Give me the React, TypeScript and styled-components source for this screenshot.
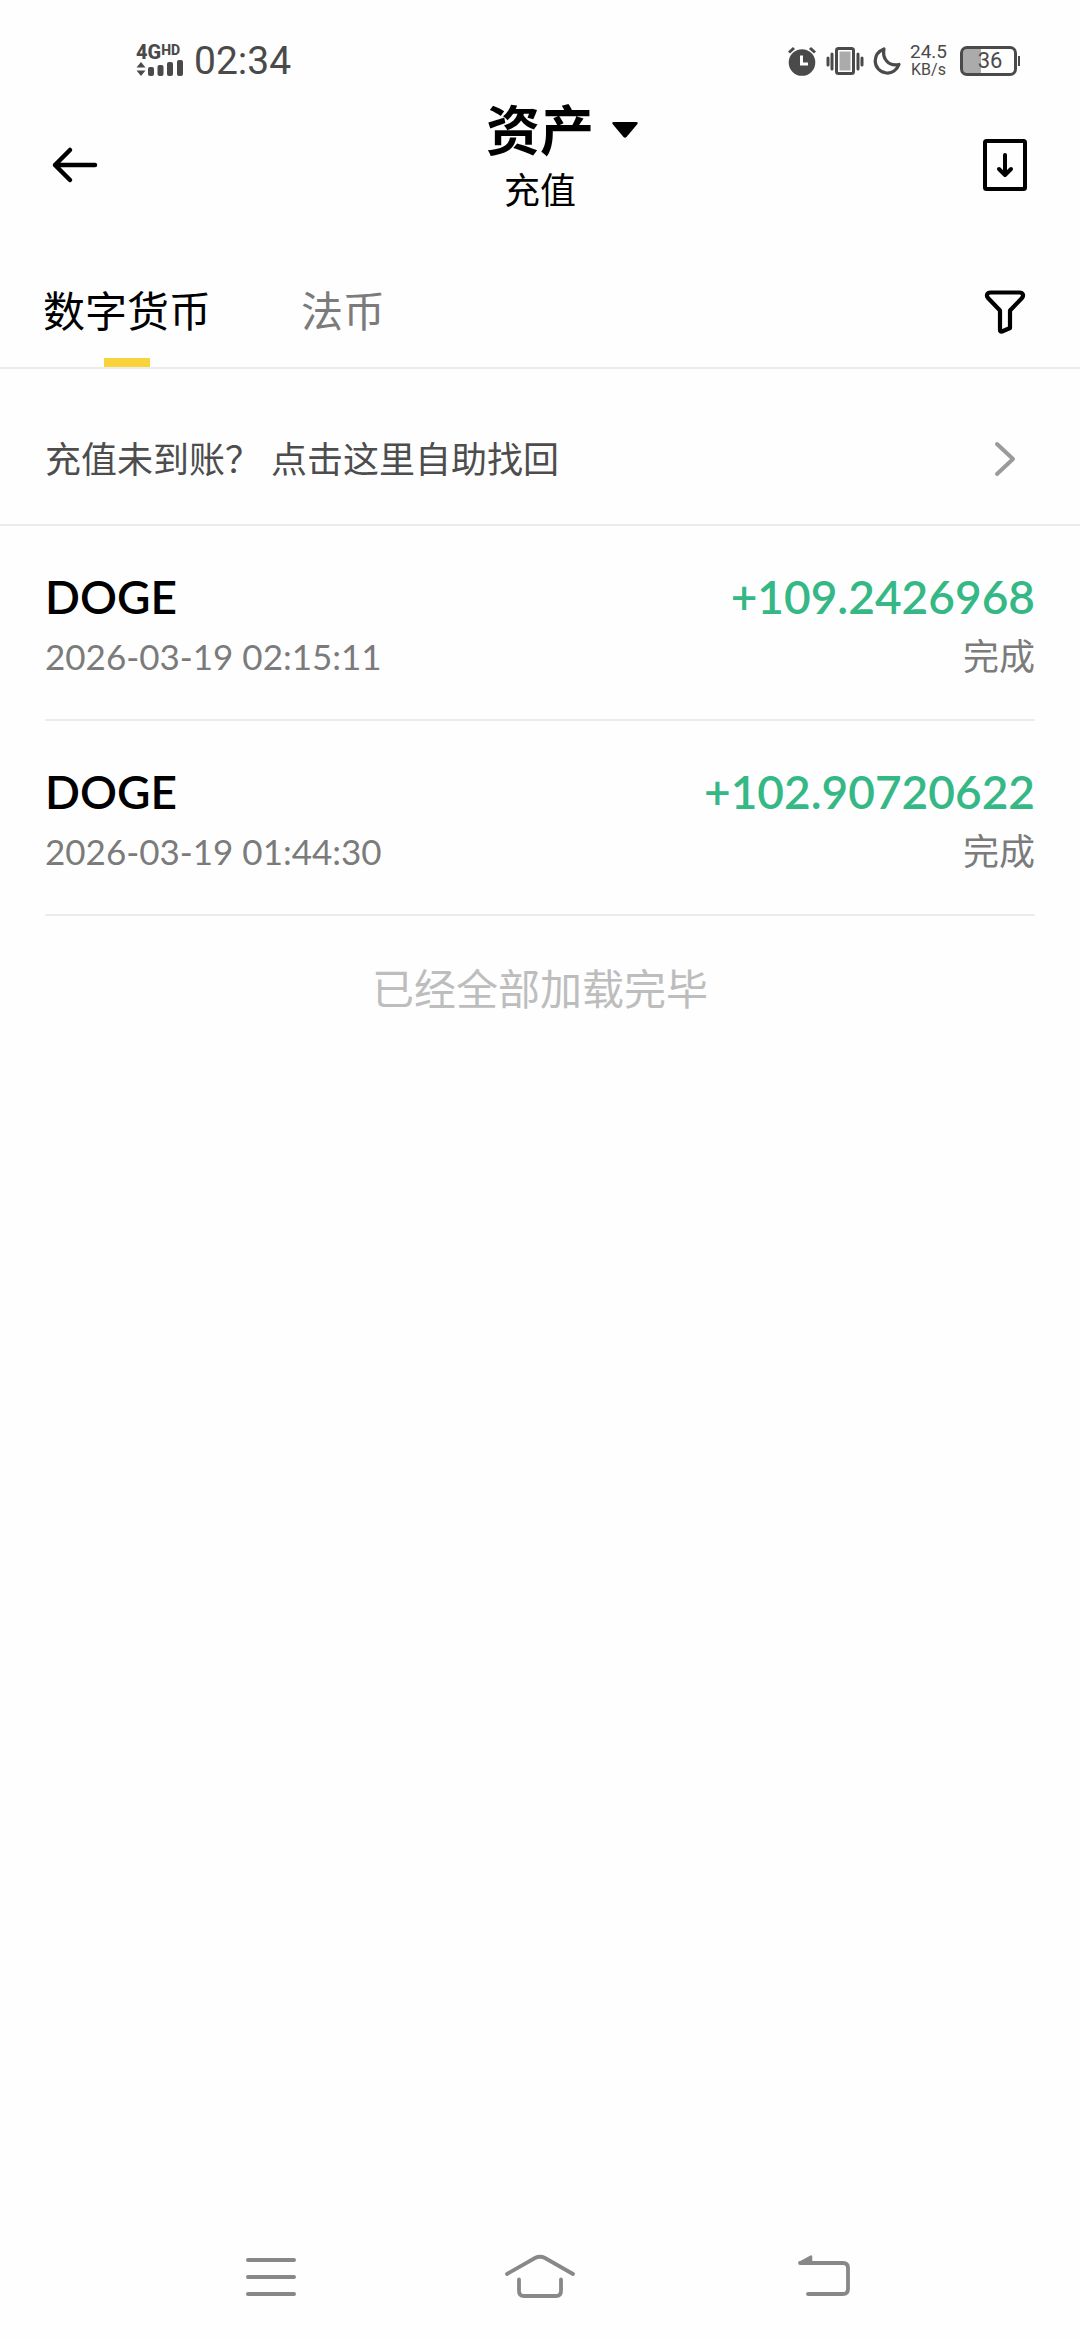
import React, { useState } from "react";
import styled, { createGlobalStyle } from "styled-components";

const cjk = `"Liberation Sans", "Noto Sans CJK SC", sans-serif`;
const latin = `Lato, "Noto Sans CJK SC", sans-serif`;
const system = `Roboto, "Noto Sans CJK SC", sans-serif`;

const GlobalStyle = createGlobalStyle`
  *, *::before, *::after { box-sizing: border-box; }
  body { margin: 0; background: #fefefe; font-family: ${cjk}; color: #000; }
  button { border: 0; padding: 0; margin: 0; background: none; color: inherit; font: inherit; cursor: pointer; }
  svg { display: block; flex: none; }
`;

const Screen = styled.div`
  min-height: 100vh;
  display: flex;
  flex-direction: column;
`;

const StatusBar = styled.div`
  display: flex;
  align-items: center;
  justify-content: space-between;
  height: 96px;
  padding: 25px 60px 0 136px;
  font-family: ${system};
  color: #4a4a4a;
`;

const StatusGroup = styled.div<{ $gap: number }>`
  display: flex;
  align-items: center;
  gap: ${(p) => p.$gap}px;
`;

const Signal = styled.div`
  display: flex;
  flex-direction: column;
  width: 48px;
`;

const Network = styled.div`
  display: flex;
  align-items: flex-start;
  font-size: 20px;
  font-weight: 800;
  line-height: 16px;
`;

const NetworkTag = styled.span`
  font-size: 14px;
  line-height: 12px;
`;

const Clock = styled.span`
  font-size: 39px;
  line-height: 40px;
`;

const Speed = styled.div`
  display: flex;
  flex-direction: column;
  align-items: center;
  font-size: 19px;
  line-height: 18px;
`;

const SpeedUnit = styled.span`
  font-size: 16px;
`;

const Battery = styled.div`
  display: flex;
  align-items: center;
  gap: 1px;
  margin-left: 4px;
`;

const BatteryCell = styled.div`
  display: flex;
  align-items: center;
  justify-content: center;
  width: 57px;
  height: 30px;
  padding-left: 3px;
  border: 3px solid #4a4a4a;
  border-radius: 7px;
  background: linear-gradient(to right, #ababab 36%, transparent 36%);
  font-size: 22px;
  line-height: 24px;
`;

const BatteryTip = styled.span`
  width: 2px;
  height: 10px;
  background: #4a4a4a;
`;

const Header = styled.header`
  display: grid;
  grid-template-columns: 60px 1fr 60px;
  align-items: center;
  height: 138px;
  padding: 0 45px;
`;

const IconButton = styled.button`
  display: flex;
  align-items: center;
  justify-content: center;
  height: 60px;
`;

const TitleBlock = styled.div`
  align-self: start;
  text-align: center;
`;

const TitleButton = styled.button`
  display: grid;
  grid-template-columns: 1fr auto 1fr;
  align-items: center;
  gap: 16px;
  width: 100%;
`;

const Title = styled.span`
  grid-column: 2;
  font-size: 54px;
  font-weight: 700;
  line-height: 72px;
`;

const Subtitle = styled.div`
  font-size: 36px;
  line-height: 48px;
`;

const TabBar = styled.nav`
  display: flex;
  align-items: flex-end;
  justify-content: space-between;
  height: 135px;
  padding: 0 45px 0 43px;
  border-bottom: 2px solid #ececec;
`;

const Tabs = styled.div`
  display: flex;
  gap: 90px;
`;

const Tab = styled.button<{ $active: boolean }>`
  display: flex;
  flex-direction: column;
  align-items: center;
  gap: 15px;
  font-size: 42px;
  line-height: 60px;
  color: ${(p) => (p.$active ? "#000" : "#7b7b7b")};

  &::after {
    content: "";
    width: 46px;
    height: 9px;
    background: ${(p) => (p.$active ? "#f8d33a" : "transparent")};
  }
`;

const FilterSlot = styled.div`
  display: flex;
  padding-bottom: 25px;
`;

const Notice = styled.a`
  display: flex;
  align-items: center;
  justify-content: space-between;
  padding: 65px 60px 36px 45px;
  border-bottom: 2px solid #ececec;
  font-size: 36px;
  line-height: 54px;
  color: #4d4d4d;
  text-decoration: none;
`;

const List = styled.ul`
  list-style: none;
  margin: 0;
  padding: 0 45px;
`;

const Item = styled.li`
  display: flex;
  justify-content: space-between;
  padding: 41px 0 34px;
  border-bottom: 2px solid #ececec;
  font-family: ${latin};
`;

const ItemSide = styled.div<{ $end?: boolean }>`
  display: flex;
  flex-direction: column;
  align-items: ${(p) => (p.$end ? "flex-end" : "flex-start")};
`;

const Main = styled.span<{ $color: string }>`
  font-size: 46px;
  font-weight: 600;
  line-height: 60px;
  color: ${(p) => p.$color};
`;

const Meta = styled.span<{ $size: number }>`
  font-size: ${(p) => p.$size}px;
  line-height: 58px;
  color: #7b7b7b;
`;

const EndNote = styled.p`
  margin: 0;
  padding: 45px 0;
  text-align: center;
  font-size: 42px;
  line-height: 60px;
  color: #bdbdbd;
`;

const SystemNav = styled.nav`
  display: grid;
  grid-template-columns: repeat(3, 1fr);
  align-items: center;
  height: 126px;
  margin-top: auto;
  padding: 0 135px 0 136px;
`;

const records = [
  { coin: "DOGE", amount: "+109.2426968", time: "2026-03-19 02:15:11", status: "完成" },
  { coin: "DOGE", amount: "+102.90720622", time: "2026-03-19 01:44:30", status: "完成" },
];

const SignalBars = () => (
  <svg width="48" height="17" viewBox="0 0 48 17" fill="#4a4a4a">
    <path d="M5 2l4.500 5.500h-9z M5 16l4.500-5.500h-9z" />
    <rect x="12" y="7" width="6" height="9" rx="2" />
    <rect x="21.500" y="5" width="6" height="11" rx="2" />
    <rect x="31" y="2" width="6" height="14" rx="2" />
    <rect x="41" y="0" width="6" height="16" rx="2" />
  </svg>
);

const AlarmIcon = () => (
  <svg width="30" height="30" viewBox="0 0 30 30" fill="none">
    <circle cx="15" cy="16.500" r="13.300" fill="#4a4a4a" />
    <path d="M2 6.500L7 2M28 6.500L23 2" stroke="#4a4a4a" strokeWidth="3" />
    <path d="M14.500 9.500v8.500h6.500" stroke="#fefefe" strokeWidth="3" />
  </svg>
);

const VibrateIcon = () => (
  <svg width="38" height="30" viewBox="0 0 38 30" fill="none" stroke="#4a4a4a">
    <rect x="10.500" y="2.500" width="17" height="25" rx="2" strokeWidth="3" />
    <rect x="13.500" y="5.500" width="11" height="19" fill="#ababab" stroke="none" />
    <path d="M6 8v15M32 8v15M2 12v7M36 12v7" strokeWidth="3" strokeLinecap="round" />
  </svg>
);

const MoonIcon = () => (
  <svg width="28" height="30" viewBox="0 0 28 30" fill="none" stroke="#4a4a4a" strokeWidth="3.200" strokeLinejoin="round">
    <path d="M11 3C9 12 15 21 26 18.500C24 24 19 27.500 13.500 27C7 26.500 2 21 2.200 14.500C2.500 9 6 5 11 3Z" />
  </svg>
);

const BackArrow = () => (
  <svg width="60" height="44" viewBox="0 0 60 44" fill="none" stroke="#000" strokeWidth="4.500" strokeLinecap="round" strokeLinejoin="round">
    <path d="M50 22H10M25 7L10 22l15 15" />
  </svg>
);

const Caret = () => (
  <svg width="30" height="20" viewBox="0 0 30 20">
    <path d="M4 0h22q3 0 1 2.500L16.500 15q-1.500 1.500-3 0L3 2.500Q1 0 4 0z" fill="#000" />
  </svg>
);

const DownloadIcon = () => (
  <svg width="60" height="60" viewBox="0 0 60 60" fill="none" stroke="#000" strokeWidth="4" strokeLinecap="round" strokeLinejoin="round">
    <rect x="10" y="6" width="40" height="48" rx="1.500" />
    <path d="M30 20v20M24 34l6 6 6-6" />
  </svg>
);

const FilterIcon = () => (
  <svg width="60" height="60" viewBox="0 0 60 60" fill="none" stroke="#000" strokeWidth="4.200" strokeLinejoin="round">
    <path d="M15.500 10.500H44.500C48 10.500 49 13.500 47 16L35 28.500V46L27 49.500Q25 50 25 48V28.500L13 16C11 13.500 12 10.500 15.500 10.500Z" />
  </svg>
);

const Chevron = () => (
  <svg width="30" height="40" viewBox="0 0 30 40" fill="none" stroke="#9a9a9a" strokeWidth="4" strokeLinecap="round" strokeLinejoin="round">
    <path d="M7 3l16 15L7 33" />
  </svg>
);

const RecentsIcon = () => (
  <svg width="54" height="46" viewBox="0 0 54 46" stroke="#888" strokeWidth="4" strokeLinecap="round">
    <path d="M4 6h46M4 23h46M4 40h46" />
  </svg>
);

const HomeIcon = () => (
  <svg width="74" height="46" viewBox="0 0 74 46" fill="none" stroke="#888" strokeWidth="3.800" strokeLinecap="round">
    <path d="M4 20L32 4Q37 1.500 42 4L70 20" />
    <path d="M16 25.500V37Q16 42 21 42H53Q58 42 58 37V25.500" />
  </svg>
);

const ReturnIcon = () => (
  <svg width="84" height="46" viewBox="0 0 84 46" fill="none" stroke="#888" strokeWidth="3.800" strokeLinecap="round" strokeLinejoin="round">
    <path d="M32 9H75Q80 9 80 14V35Q80 40 75 40H40" />
    <path d="M32 8.500L43 2.500V8.500Z" fill="#888" strokeWidth="2.500" />
  </svg>
);

export default function App() {
  const [active, setActive] = useState("数字货币");

  return (
    <Screen>
      <GlobalStyle />
      <StatusBar>
        <StatusGroup $gap={10}>
          <Signal>
            <Network>
              4G<NetworkTag>HD</NetworkTag>
            </Network>
            <SignalBars />
          </Signal>
          <Clock>02:34</Clock>
        </StatusGroup>
        <StatusGroup $gap={9}>
          <AlarmIcon />
          <VibrateIcon />
          <MoonIcon />
          <Speed>
            <span>24.5</span>
            <SpeedUnit>KB/s</SpeedUnit>
          </Speed>
          <Battery>
            <BatteryCell>36</BatteryCell>
            <BatteryTip />
          </Battery>
        </StatusGroup>
      </StatusBar>

      <Header>
        <IconButton aria-label="返回">
          <BackArrow />
        </IconButton>
        <TitleBlock>
          <TitleButton>
            <Title>资产</Title>
            <Caret />
          </TitleButton>
          <Subtitle>充值</Subtitle>
        </TitleBlock>
        <IconButton aria-label="下载">
          <DownloadIcon />
        </IconButton>
      </Header>

      <TabBar>
        <Tabs>
          {["数字货币", "法币"].map((name) => (
            <Tab key={name} $active={name === active} onClick={() => setActive(name)}>
              {name}
            </Tab>
          ))}
        </Tabs>
        <FilterSlot>
          <IconButton aria-label="筛选">
            <FilterIcon />
          </IconButton>
        </FilterSlot>
      </TabBar>

      <Notice href="#recover">
        <span>充值未到账？ 点击这里自助找回</span>
        <Chevron />
      </Notice>

      <List>
        {records.map((r) => (
          <Item key={r.time}>
            <ItemSide>
              <Main $color="#000">{r.coin}</Main>
              <Meta $size={35}>{r.time}</Meta>
            </ItemSide>
            <ItemSide $end>
              <Main $color="#36b886">{r.amount}</Main>
              <Meta $size={36}>{r.status}</Meta>
            </ItemSide>
          </Item>
        ))}
      </List>
      <EndNote>已经全部加载完毕</EndNote>

      <SystemNav>
        <IconButton aria-label="最近任务">
          <RecentsIcon />
        </IconButton>
        <IconButton aria-label="主屏幕">
          <HomeIcon />
        </IconButton>
        <IconButton aria-label="后退">
          <ReturnIcon />
        </IconButton>
      </SystemNav>
    </Screen>
  );
}
